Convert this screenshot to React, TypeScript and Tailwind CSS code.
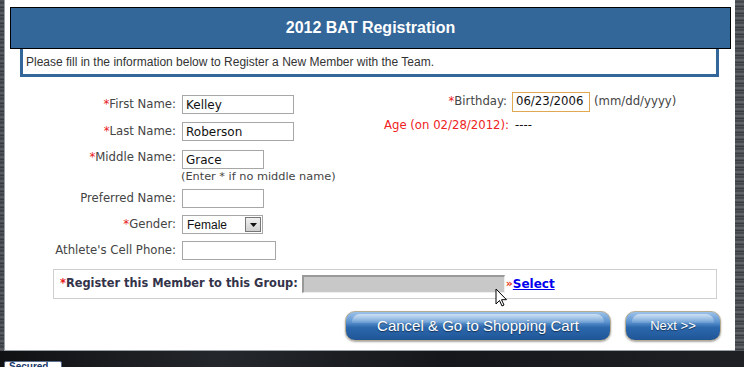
import type { FC, ReactNode } from "react";

const VERDANA = "font-['DejaVu_Sans',Verdana,sans-serif]";
const ARIAL = "font-['Liberation_Sans',Arial,sans-serif]";

const Req = () => <span className="text-[#e8201c]">*</span>;

type RowProps = {
    label: ReactNode;
    children?: ReactNode;
    className?: string;
    top?: boolean;
};

const Row: FC<RowProps> = ({ label, children, className = "", top }) => (
    <div className={`flex ${top ? "items-start" : "items-center"} ${className}`}>
        <div className="w-[172px] shrink-0 text-right pr-[1px]">{label}</div>
        <div className="ml-[5px]">{children}</div>
    </div>
);

const TextBox: FC<{ value?: string; w: string; h?: string }> = ({ value = "", w, h = "h-[19px]" }) => (
    <div
        className={`${w} ${h} border border-[#a7a7a7] bg-white px-[3px] flex items-center text-[12px] text-[#111] ${VERDANA}`}
    >
        {value}
    </div>
);

const GlossButton: FC<{ children: ReactNode; className: string }> = ({ children, className }) => (
    <div
        className={`relative h-[30px] rounded-[10px] border border-[#b7ab92] bg-[linear-gradient(to_bottom,#9cc2ea_0%,#5d95d0_35%,#2d68ad_55%,#1e5597_100%)] shadow-[0_1px_2px_rgba(0,0,0,0.35)] flex items-center justify-center text-white ${ARIAL} [text-shadow:0_1px_1px_rgba(0,0,0,0.5)] ${className}`}
    >
        <div className="absolute left-[6px] right-[6px] top-[2px] h-[9px] rounded-t-[8px] bg-[linear-gradient(to_bottom,rgba(255,255,255,0.55),rgba(255,255,255,0.1))]" />
        <span className="relative">{children}</span>
    </div>
);

export default function App() {
    return (
        <div className="relative w-[744px] h-[367px] overflow-hidden bg-[#16181b]">
            <div className="flex h-[351px]">
                {/* textured backdrop on the left */}
                <div className="w-[4px] bg-[repeating-linear-gradient(to_bottom,#55585e_0px,#3a3d42_3px,#60646a_5px,#2e3135_8px)]" />

                <div className="w-[731px] bg-white border-b border-l border-[#9ba1a9] flex flex-col">
                    {/* header */}
                    <div className="mt-[7px] ml-[5px] w-[721px] h-[42px] bg-[#336699] border border-black flex items-center justify-center">
                        <span className={`text-white text-[16px] font-bold ${ARIAL}`}>2012 BAT Registration</span>
                    </div>
                    <div className="ml-[15px] w-[699px] h-[28px] border-[3px] border-t-0 border-[#336699] flex items-center pl-[3px]">
                        <span className={`text-[12px] text-[#333] ${ARIAL}`}>
                            Please fill in the information below to Register a New Member with the Team.
                        </span>
                    </div>

                    {/* form */}
                    <div className={`flex h-[186px] text-[11.7px] text-[#444] ${VERDANA}`}>
                        <div className="w-[372px] flex flex-col pt-[18px]">
                            <Row label={<><Req />First Name:</>}>
                                <TextBox value="Kelley" w="w-[112px]" />
                            </Row>
                            <Row className="mt-[8px]" label={<><Req />Last Name:</>}>
                                <TextBox value="Roberson" w="w-[112px]" />
                            </Row>
                            <Row className="mt-[8px]" top label={<><Req />Middle Name:</>}>
                                <div className="pt-[1px]">
                                    <TextBox value="Grace" w="w-[82px]" />
                                </div>
                            </Row>
                            <div className="ml-[176px] mt-[1px] text-[11.3px] leading-[14px] text-[#444]">
                                (Enter * if no middle name)
                            </div>
                            <Row className="mt-[5px]" label="Preferred Name:">
                                <TextBox w="w-[82px]" />
                            </Row>
                            <Row className="mt-[7px]" label={<><Req />Gender:</>}>
                                <div className="w-[81px] h-[19px] border border-[#a7a7a7] bg-white flex items-center">
                                    <span className={`flex-1 pl-[4px] text-[12px] text-[#111] ${ARIAL}`}>Female</span>
                                    <div className="w-[16px] h-[15px] mr-[1px] border border-[#777] bg-[linear-gradient(to_bottom,#f0f0f0,#cfcfcf)] flex items-center justify-center">
                                        <svg width="7" height="4" viewBox="0 0 7 4">
                                            <path d="M0 0h7L3.5 4z" fill="#111" />
                                        </svg>
                                    </div>
                                </div>
                            </Row>
                            <Row className="mt-[7px]" label="Athlete's Cell Phone:">
                                <TextBox w="w-[94px]" />
                            </Row>
                        </div>

                        <div className="flex flex-col pt-[15px]">
                            <div className="flex items-center">
                                <div className="w-[130px] text-right">
                                    <Req />Birthday:
                                </div>
                                <div className="ml-[5px] w-[78px] h-[20px] border border-[#e0a850] px-[3px] flex items-center text-[#111]">
                                    06/23/2006
                                </div>
                                <span className="ml-[4px]">(mm/dd/yyyy)</span>
                            </div>
                            <div className="flex items-center mt-[5px]">
                                <div className="w-[132px] text-right text-[#ee2222] whitespace-nowrap">Age (on 02/28/2012):</div>
                                <span className="ml-[6px] text-[#111]">----</span>
                            </div>
                        </div>
                    </div>

                    {/* group */}
                    <div className={`ml-[48px] mt-[6px] w-[664px] h-[30px] border border-[#cfcfcf] flex items-center pl-[6px] ${VERDANA}`}>
                        <span className="text-[11.4px] font-bold text-[#33334a]">
                            <Req />Register this Member to this Group:
                        </span>
                        <div className="ml-[4px] w-[203px] h-[18px] bg-[#c8c8c8] border-t-2 border-l-2 border-[#999] border-b border-r border-b-[#eee] border-r-[#eee]" />
                        <span className="ml-[1px] text-[11px] text-[#e83010] font-bold">»</span>
                        <span className="text-[12px] font-bold text-[#0000ee] underline">Select</span>
                    </div>

                    {/* buttons */}
                    <div className="flex mt-[12px] ml-[340px]">
                        <GlossButton className="w-[266px] text-[15px]">Cancel &amp; Go to Shopping Cart</GlossButton>
                        <GlossButton className="ml-[14px] w-[96px] text-[13px]">Next &gt;&gt;</GlossButton>
                    </div>
                </div>

                <div className="flex-1 bg-[repeating-linear-gradient(to_bottom,#5a5d62_0px,#3c3f44_2px,#6a6d72_4px,#2f3236_7px)]" />
            </div>

            {/* dark strip below the panel */}
            <div className="h-[16px] relative bg-[linear-gradient(to_right,#101113,#24272b_30%,#15171a_60%,#1e2023)]">
                <div className={`absolute left-[4px] top-[10px] w-[58px] h-[10px] bg-white border border-[#5a6e90] rounded-[2px] text-[10px] leading-[10px] pl-[4px] text-[#1a3a6a] font-bold overflow-hidden ${ARIAL}`}>
                    Secured
                </div>
            </div>

            {/* mouse pointer */}
            <svg className="absolute left-[495px] top-[288px]" width="14" height="20" viewBox="0 0 14 20">
                <path d="M1 1v15l3.5-3.5 2.5 5.5 2-1-2.5-5.3h5z" fill="#fff" stroke="#000" strokeWidth="1" />
            </svg>
        </div>
    );
}
